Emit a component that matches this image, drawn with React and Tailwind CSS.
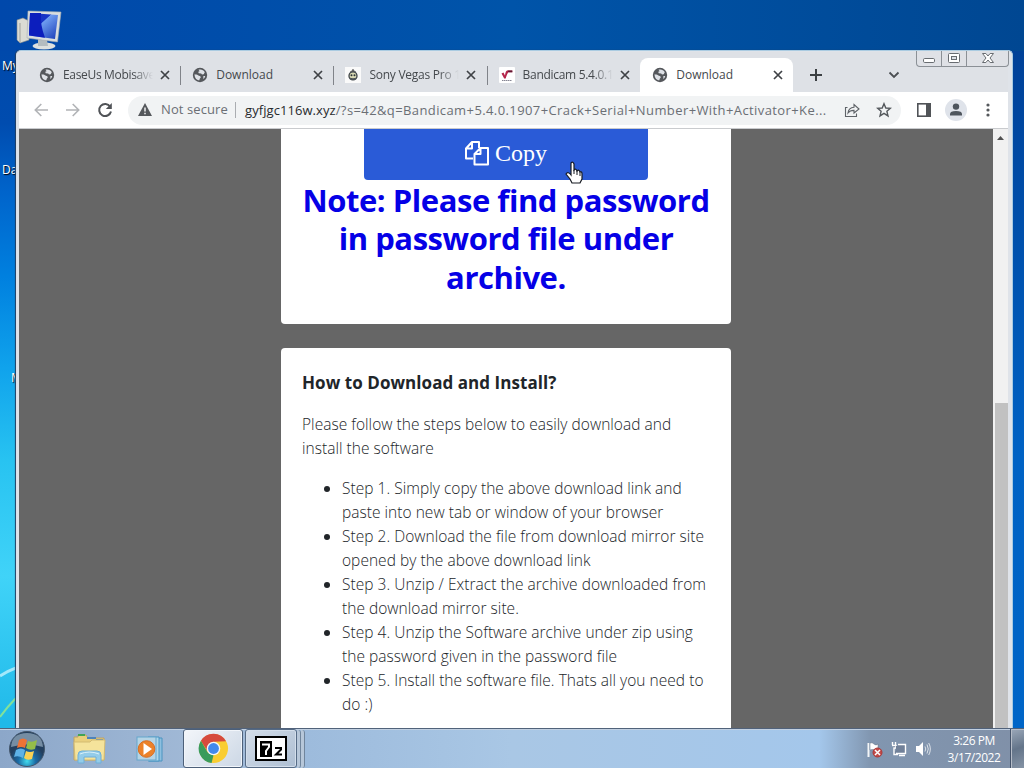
import React from 'react';

const Globe = () => (
  <svg viewBox="0 0 16 16" className="h-4 w-4 shrink-0">
    <circle cx="8" cy="8" r="7.2" fill="#55585c" />
    <path d="M2.6 7.2 C4 7.5 5 7.4 6 8.2 C7.2 9.1 8.6 8.8 8.8 10.1 C8.8 11.4 7.5 11.2 7.4 13.3 C4.3 13 2.4 10.5 2.6 7.2Z M6.5 2.8 C9 2 11.6 3 12.8 5.3 L11.7 7.2 L10 7.5 L9.2 6.4 L6.7 6.2 L6.2 4.8 L7.6 4.2Z M11.4 9.1 L13.2 9 C13 10.4 12.3 11.4 11.3 12.1Z" fill="#dee1e6" />
  </svg>
);

const RobotIcon = () => (
  <svg viewBox="0 0 16 16" className="h-4 w-4 shrink-0">
    <rect width="16" height="16" fill="#fafafa" />
    <path d="M8 2v2.500M5.500 5l1-1h3l1 1" stroke="#333" fill="none" />
    <circle cx="8" cy="8.900" r="4" fill="#d9d9b4" stroke="#3c4247" strokeWidth="1.300" />
    <path d="M4.500 10.500Q8 12 11.500 10.500L10 13H6Z" fill="#4b5258" />
    <circle cx="6.500" cy="8.300" r="1" fill="#2b3338" />
    <circle cx="9.500" cy="8.300" r="1" fill="#2b3338" />
  </svg>
);

const RootIcon = () => (
  <svg viewBox="0 0 16 16" className="h-4 w-4 shrink-0">
    <rect width="16" height="16" rx="1" fill="#fff" />
    <path d="M2.5 6.5 L4.5 5.5 L6 8.5 Q6.5 3.5 8.5 3.5 H13.3 V5.3 H9.5 Q8.3 6 6.7 11.5 H5.2Z" fill="#b5254b" />
    <path d="M8.5 3.5H13.3V5.3H9.5Z" fill="#5e1730" />
    <path d="M3 13.5h10" stroke="#667" strokeWidth=".8" strokeDasharray="1.5 .5" />
  </svg>
);

const Close = () => (
  <svg viewBox="0 0 10 10" className="h-[10px] w-[10px] shrink-0">
    <path d="M1 1L9 9M9 1L1 9" stroke="#3f4246" strokeWidth="1.7" />
  </svg>
);

function Tab({ icon, title, titleClass = '', active, divider }) {
  return (
    <div className={'relative flex h-[34px] w-[153.2px] shrink-0 items-center ' + (active ? 'ml-[-1px] rounded-t-lg bg-white pl-[12.5px]' : 'pl-[11px]')}>
      {icon}
      <span className={'ml-[8px] w-[90px] overflow-hidden whitespace-nowrap text-[12px] text-[#45494d] ' + titleClass}>{title}</span>
      <span className="ml-[7px] flex"><Close /></span>
      {divider && <span className="absolute right-0 top-2 h-[19px] w-px bg-[#808389]" />}
    </div>
  );
}

const fade = '[mask-image:linear-gradient(to_right,black_78%,transparent_100%)]';

function TabStrip() {
  return (
    <div className="flex h-[40px] bg-[#dee1e6] pl-[9px] pt-[6px]">
      <Tab icon={<Globe />} title="EaseUs Mobisave" titleClass={fade + ' tracking-[-0.33px]'} divider />
      <Tab icon={<Globe />} title="Download" divider />
      <Tab icon={<RobotIcon />} title="Sony Vegas Pro 1" titleClass={fade + ' tracking-[-0.25px]'} divider />
      <Tab icon={<RootIcon />} title="Bandicam 5.4.0.1" titleClass={fade + ' tracking-[-0.3px]'} />
      <Tab icon={<Globe />} title="Download" active />
      <svg viewBox="0 0 12 12" className="ml-[17px] mt-[11px] h-3 w-3"><path d="M6 0V12M0 6H12" stroke="#3c4043" strokeWidth="2" /></svg>
      <svg viewBox="0 0 12 8" className="ml-[66px] mt-[13px] h-2 w-3"><path d="M1.5 1.5L6 6L10.5 1.5" fill="none" stroke="#4a4e52" strokeWidth="1.8" /></svg>
    </div>
  );
}

function WindowButtons() {
  return (
    <div className="absolute right-[3px] top-0 flex h-[16px] w-[93px] rounded-b-[4px] border border-t-0 border-[#8b9096] bg-[#dfe1e6]">
      <div className="flex w-[25px] justify-center border-r border-[#8b9096]">
        <svg viewBox="0 0 24 16" className="mt-[-1px] h-4 w-6"><rect x="6.5" y="8.5" width="11" height="4" rx="1.2" fill="#fff" stroke="#686c71" /></svg>
      </div>
      <div className="flex w-[25px] justify-center border-r border-[#8b9096]">
        <svg viewBox="0 0 24 16" className="mt-[-1px] h-4 w-6"><rect x="6.5" y="3.5" width="11" height="9" rx="1" fill="#fff" stroke="#686c71" /><rect x="9.5" y="6.5" width="5" height="3" fill="#dee1e6" stroke="#686c71" /></svg>
      </div>
      <div className="flex flex-1 justify-center">
        <svg viewBox="0 0 24 16" className="mt-[-1px] h-4 w-6"><path d="M6.5 3.5h3.4L12 6l2.1-2.5h3.4L14 8l3.5 4.5h-3.4L12 10l-2.1 2.5H6.500L10 8Z" fill="#fff" stroke="#686c71" /></svg>
      </div>
    </div>
  );
}

function Toolbar() {
  return (
    <div className="flex h-[37px] items-center border-b border-[#c9cbce] bg-white pl-[15px]">
      <svg viewBox="0 0 14 14" className="h-[14px] w-[14px]"><path d="M14 7H1.500M7.300 1L1.300 7L7.300 13" stroke="#b2b4b7" strokeWidth="1.6" fill="none" /></svg>
      <svg viewBox="0 0 14 14" className="ml-[18px] h-[14px] w-[14px]"><path d="M0 7H12.500M6.700 1L12.700 7L6.700 13" stroke="#b2b4b7" strokeWidth="1.6" fill="none" /></svg>
      <svg viewBox="0 0 16 16" className="ml-[17px] h-4 w-4"><path d="M13.200 4.700A6 6 0 1 0 14 9.500" stroke="#505357" strokeWidth="2" fill="none" /><path d="M14.800 1V7H8.800Z" fill="#505357" /></svg>
      <div className="ml-[15px] flex h-[29px] w-[773px] items-center rounded-full bg-[#f1f3f4] pl-[10px] text-[13px]">
        <svg viewBox="0 0 14 14" className="h-[14px] w-[14px] shrink-0"><path d="M7 0L14 13H0Z" fill="#55585c" /><path d="M7 4.500V8.500M7 9.700V11.300" stroke="#fff" strokeWidth="1.4" /></svg>
        <span className="ml-[9px] w-[74px] whitespace-nowrap tracking-[0.1px] text-[#6b6f74]">Not secure</span>
        <span className="h-[16px] w-px shrink-0 bg-[#aaadb1]" />
        <span className="ml-[9px] w-[585px] whitespace-nowrap pt-px tracking-[0.4px] text-[#6b6f74]"><span className="tracking-[0.07px] text-[#292b2e]">gyfjgc116w.xyz</span>/?s=42&amp;q=Bandicam+5.4.0.1907+Crack+Serial+Number+With+Activator+Ke...</span>
        <svg viewBox="0 0 16 16" className="ml-[14px] h-4 w-4 shrink-0"><path d="M3.500 5.500H1.500V14.500H12.500V11.500M4 11C4.500 7 6.500 5.500 10 5.300V2.500L15 7L10 11V8.400C7 8.300 5.500 9 4 11Z" stroke="#5f6368" strokeWidth="1.100" fill="none" /></svg>
        <svg viewBox="0 0 16 16" className="ml-[16px] h-4 w-4 shrink-0"><path d="M8 1.700L9.800 6L14.400 6.300L10.900 9.300L12 13.900L8 11.400L4 13.900L5.100 9.300L1.600 6.300L6.200 6Z" stroke="#54585c" strokeWidth="1.400" fill="none" /></svg>
      </div>
      <svg viewBox="0 0 14 14" className="ml-[16px] h-[14px] w-[14px]"><rect x=".8" y=".8" width="12.400" height="12.400" fill="#fff" stroke="#505357" strokeWidth="1.600" /><rect x="9" width="5" height="14" fill="#505357" /></svg>
      <svg viewBox="0 0 22 22" className="ml-[14px] h-[22px] w-[22px]"><circle cx="11" cy="11" r="11" fill="#dfe3ea" /><circle cx="11" cy="7.600" r="3.200" fill="#4e555d" /><path d="M5 16.500V15Q5 12 11 12Q17 12 17 15V16.500Z" fill="#4e555d" /></svg>
      <svg viewBox="0 0 4 14" className="ml-[19px] h-[14px] w-[4px]"><g fill="#55585c"><circle cx="2" cy="2" r="1.600" /><circle cx="2" cy="7" r="1.600" /><circle cx="2" cy="12" r="1.600" /></g></svg>
    </div>
  );
}

const steps = [
  ['Step 1. Simply copy the above download link and', 'paste into new tab or window of your browser'],
  ['Step 2. Download the file from download mirror site', 'opened by the above download link'],
  ['Step 3. Unzip / Extract the archive downloaded from', 'the download mirror site.'],
  ['Step 4. Unzip the Software archive under zip using', 'the password given in the password file'],
  ['Step 5. Install the software file. Thats all you need to', 'do :)'],
];

function Page() {
  return (
    <div className="flex h-[599px] bg-[#666]">
      <main className="flex h-full flex-1 flex-col overflow-hidden pl-[262px]">
        <section className="h-[195px] w-[450px] shrink-0 rounded-b-[4px] bg-white">
          <div className="ml-[83px] flex h-[51px] w-[284px] items-center justify-center gap-[6px] rounded-b-[4px] bg-[#2a5bd7] pb-[3px] font-['Liberation_Serif',serif] text-[24px] text-white">
            <svg viewBox="0 0 24 25" className="h-[25px] w-6"><path d="M8 17.500H1V7.500L7 1H14V7M7 1V7.500H1M9.500 23.500V13L15.500 7H23V23.500ZM15.500 7V13H9.500" stroke="#fff" strokeWidth="2" strokeLinejoin="round" fill="none" /></svg>
            <span>Copy</span>
          </div>
          <div className="mt-[1px] whitespace-nowrap text-center text-[31px] font-bold leading-[38.400px] tracking-[-0.45px] text-[#0500e6]">
            Note: Please find password<br />in password file under<br />archive.
          </div>
        </section>
        <section className="mt-[24px] h-[390px] w-[450px] shrink-0 rounded-t-[4px] bg-white pl-[21px] pt-[23px] text-[15.500px] font-[350] leading-6 tracking-[0.03px] text-[#212529]">
          <h2 className="whitespace-nowrap text-[17px] font-bold tracking-[0.06px] text-[#212529]">How to Download and Install?</h2>
          <p className="mt-[17px] whitespace-nowrap">Please follow the steps below to easily download and<br />install the software</p>
          <ul className="mt-4 list-disc pl-10">
            {steps.map((s) => <li key={s[0]} className="whitespace-nowrap">{s[0]}<br />{s[1]}</li>)}
          </ul>
        </section>
      </main>
      <div className="flex w-[15px] flex-col bg-[#f1f1f1]">
        <svg viewBox="0 0 15 18" className="h-[18px] w-[15px]"><path d="M4 11L7.500 7L11 11Z" fill="#505050" /></svg>
        <div className="ml-[2px] mt-[256px] w-[13px] flex-1 bg-[#c1c1c1]" />
      </div>
    </div>
  );
}

function Computer() {
  return (
    <svg viewBox="0 0 48 42" className="absolute left-[15px] top-[9px] h-[42px] w-12">
      <defs><linearGradient id="screen" x1="0" x2="1" y1="0" y2="1"><stop stopColor="#152fc0" /><stop offset=".4" stopColor="#1635c7" /><stop offset=".42" stopColor="#6f9df0" /><stop offset="1" stopColor="#183bb7" /></linearGradient></defs>
      <path d="M2 11L8 9L14 12V31L5 34L2 31Z" fill="#dadbd4" stroke="#888c89" strokeWidth=".6" /><path d="M5 14V33" stroke="#a0a19c" />
      <ellipse cx="29" cy="37" rx="11.500" ry="3.500" fill="#dde0df" /><path d="M23 30L32 31L33 37H23Z" fill="#b4bcc0" />
      <path d="M13 2L46 3L42.500 33L12 29Z" fill="#d9dedf" stroke="#a4abb0" strokeWidth=".6" /><path d="M15 4L43 6L40 30L14 26.500Z" fill="url(#screen)" />
      <path d="M15 4H26Q25 16 30 28.800L14 26.500Z" fill="#0c1ebd" />
    </svg>
  );
}

function Taskbar() {
  return (
    <footer className="relative flex h-10 w-full items-center border-t border-[#51627a] bg-[linear-gradient(90deg,#8ca7c9_0%,#a2bad7_20%,#9dbbdc_30%,#a9c7e5_50%,#a4c7eb_80%,#8196b0_85%,#8090a8_100%)] shadow-[inset_0_1px_0_#c1d0e2]">
      <svg viewBox="0 0 38 38" className="ml-2 h-[38px] w-[38px]">
        <defs><radialGradient id="orb" cy=".85"><stop stopColor="#42dbed" /><stop offset=".5" stopColor="#1a6aa5" /><stop offset="1" stopColor="#233f5e" /></radialGradient></defs>
        <circle cx="19" cy="19" r="17.500" fill="url(#orb)" stroke="#43566b" /><path d="M3 17Q4 3 19 3Q34 3 35 17Q19 12 3 17Z" fill="#c8dce8" opacity=".5" />
        <path d="M11 10Q15 7 19 10L17 18Q13 16 9 18Z" fill="#ed7335" /><path d="M20 11Q24 13 29 10L27 19Q22 21 18 18Z" fill="#94bd49" /><path d="M8 20Q13 17 17 20L15 28Q10 25 6 27Z" fill="#5eb2e7" /><path d="M18 21Q22 23 26 21L24 29Q19 31 16 28Z" fill="#f9d154" />
      </svg>
      <svg viewBox="0 0 34 32" className="ml-[27px] h-8 w-[34px]">
        <path d="M1 4H5V2H13L15 5H31V27H1Z" fill="#e9cf7d" stroke="#bea365" /><path d="M5 2h7" stroke="#42a454" strokeWidth="2" /><path d="M14 5h9M23 7h7" stroke="#4e83bb" strokeWidth="2" /><path d="M1 9H17L19 7H32L31 27H2Z" fill="#f5e39b" stroke="#d3bb73" /><path d="M5 30V22Q5 18 9 18H24Q28 18 28 22V30H23V24H11V30Z" fill="#93cce9" stroke="#6fafd8" /><path d="M7 21Q16 17 26 21" stroke="#d9f0f9" fill="none" />
      </svg>
      <svg viewBox="0 0 30 28" className="ml-[29px] h-7 w-[30px]">
        <path d="M13 3H26V26H13" fill="#8ebfdf" stroke="#4b94c0" /><path d="M12 2H23V26H12" fill="#afd7ea" stroke="#4996c4" /><rect x="1" y="2" width="19" height="23" fill="#b5d4e5" stroke="#64a6cc" /><circle cx="10.500" cy="14" r="8.300" fill="#ec8229" stroke="#d66e24" /><path d="M7.500 8V20L16 14Z" fill="#fff" />
      </svg>
      <div className="ml-[17px] flex h-[39px] w-[60px] items-center justify-center rounded-[3px] border border-[#4d6079] bg-[linear-gradient(135deg,#f3f6fa,#ccd7e5)] shadow-[inset_0_0_0_1px_#f1f5fa]">
        <svg viewBox="0 0 32 32" className="h-[31px] w-[31px]"><circle cx="16" cy="16" r="15" fill="#f9cd32" /><path d="M3 8A15 15 0 0 1 29 8.500L16 9L10 19Z" fill="#d64a3d" /><path d="M3 8L10 20L16 23L14 31A15 15 0 0 1 3 8Z" fill="#3a9b5b" /><circle cx="16" cy="16" r="7" fill="#f4f6f8" /><circle cx="16" cy="16" r="5.600" fill="#4289ec" /></svg>
      </div>
      <div className="ml-[2px] flex h-[39px] w-[52px] shrink-0 items-center justify-center rounded-[3px] border border-[#566b85] bg-[linear-gradient(135deg,#d4deea,#adbed2)] shadow-[inset_0_0_0_1px_#d3deeb]">
        <div className="flex h-[25px] w-[32px] shrink-0 items-center justify-center border-[2px] border-black bg-white">
          <svg viewBox="0 0 28 21" className="h-[21px] w-[28px]"><rect x="3" y="3" width="12" height="16" fill="#000" /><path d="M5 6.500H12V9L9 13V17" stroke="#fff" fill="none" strokeWidth="2" /><path d="M18 10H24V11.500L19 16.500H25" stroke="#000" fill="none" strokeWidth="2" /></svg>
        </div>
      </div>
      <div className="h-[38px] w-[4px] rounded-r-[3px] border-r border-[#70859c] bg-[#b7c7d9]" />
      <div className="h-[38px] w-[4px] rounded-r-[3px] border-r border-[#70859c] bg-[#b7c7d9]" />
      <svg viewBox="0 0 16 16" className="absolute left-[867px] top-[13px] h-4 w-4"><path d="M1.500 1V15" stroke="#f4f6f8" strokeWidth="2" /><path d="M3 1Q5 0 7 2T11 2V8H8Q5 7 3 8Z" fill="#fff" stroke="#5c6b7f" strokeWidth=".5" /><circle cx="10.500" cy="10.500" r="4.500" fill="#c44b49" stroke="#ac3736" /><path d="M8 8L13 13M13 8L8 13" stroke="#fff" strokeWidth="1.500" /></svg>
      <svg viewBox="0 0 16 16" className="absolute left-[891px] top-[12px] h-4 w-4"><path d="M1.500 1V4M4.500 1V4M1 4.500H5V7H3V13.500H7M7 3.500H14.500V12.500H5M8 14.500H14" fill="#718199" stroke="#fff" strokeWidth="1.400" /><path d="M5 5H13V11H5Z" fill="#718199" /></svg>
      <svg viewBox="0 0 16 16" className="absolute left-[915px] top-[12px] h-4 w-4"><path d="M1 5H4L8 1V15L4 11H1Z" fill="#fff" /><path d="M10 5.500Q11.500 8 10 10.500M12 3.500Q14.500 8 12 12.500M13.700 2Q17 8 13.700 14" fill="none" stroke="#f3f5f7" strokeWidth=".8" /></svg>
      <div className="absolute right-[18px] top-[3px] w-[64px] text-center text-[12px] leading-[17px] tracking-[-0.45px] text-white">3:26 PM<br />3/17/2022</div>
      <div className="absolute right-0 top-0 h-full w-[14px] border-l border-[#44536a] bg-[linear-gradient(160deg,#9ba8b9,#64758a_50%,#8593a5)] shadow-[inset_1px_1px_#b6bdc8]" />
    </footer>
  );
}

export default function App() {
  return (
    <div className="relative flex h-[768px] w-[1024px] flex-col overflow-hidden bg-[linear-gradient(180deg,#0047a8_0%,#004caf_16%,#0064cb_25%,#0080df_36%,#10a3ec_48%,#28c3f1_60%,#40d3f8_75%,#20b9e9_94%)] font-['Open_Sans','Noto_Sans',sans-serif]">
      <div className="absolute right-0 top-[50px] h-[678px] w-[12px] bg-[linear-gradient(#004198,#0062c4_60%,#0065c7)]" />
      <div className="absolute inset-x-0 top-0 h-[51px] bg-[linear-gradient(90deg,#0048ab,#0054a9_50%,#004792)]" />
      <Computer />
      <div className="absolute left-[2px] top-[58px] text-[12px] leading-4 text-white [text-shadow:1px_1px_1px_black]">My</div>
      <div className="absolute left-[2px] top-[162px] text-[12px] leading-4 text-white [text-shadow:1px_1px_1px_black]">Da</div>
      <div className="absolute left-[11px] top-[370px] text-[12px] leading-4 text-white [text-shadow:1px_1px_1px_black]">M</div>
      <svg viewBox="0 0 16 70" className="absolute left-0 top-[660px] h-[70px] w-4"><path d="M0 16Q8 11 16 8" stroke="#a3e8fa" strokeWidth="3" fill="none" /><path d="M0 57Q8 46 16 38" stroke="#83e29a" strokeWidth="2" fill="none" /></svg>
      <div className="absolute left-[16px] top-[50px] h-[678px] w-[997px] overflow-hidden rounded-t-[5px] border-x border-t border-[#aacbe1] border-l-[#d9e0ea] bg-[#dfe3e9] shadow-[-1px_0_1px_#223f62]">
        <div className="ml-[2px] mt-px w-[989px]">
          <TabStrip />
          <Toolbar />
          <Page />
        </div>
        <WindowButtons />
      </div>
      <svg viewBox="0 0 18 24" className="absolute left-[565px] top-[161px] h-6 w-[18px]"><path d="M6 11V2Q8 0 9 3V9Q11 7 12 10Q14 8 15 11Q17 10 17 13V18L15 22H7L5 18L1 13Q3 10 6 14Z" fill="#fff" stroke="#171b22" strokeWidth="1.200" /><path d="M9 9V13M12 10V14M15 11V15" stroke="#171b22" /></svg>
      <div className="mt-[728px] flex h-10 shrink-0"><Taskbar /></div>
    </div>
  );
}
